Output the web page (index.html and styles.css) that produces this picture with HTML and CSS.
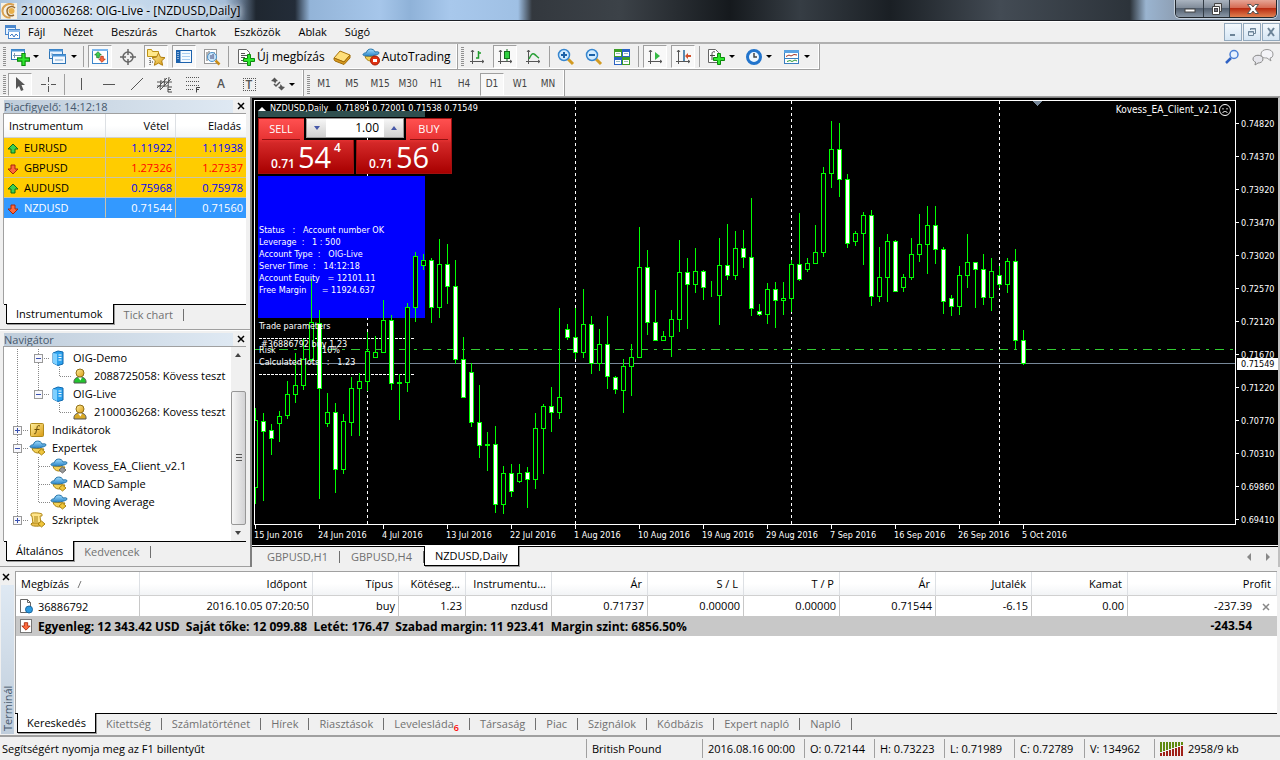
FILE: index.html
```html
<!DOCTYPE html>
<html lang="hu">
<head>
<meta charset="utf-8">
<title>2100036268: OIG-Live - [NZDUSD,Daily]</title>
<link rel="stylesheet" href="styles.css">
</head>
<body>
<svg class="defs" aria-hidden="true">
  <defs>
    <linearGradient id="gold" x1="0" y1="0" x2="1" y2="1"><stop offset="0" stop-color="#fff0a0"/><stop offset="1" stop-color="#d99a10"/></linearGradient>
    <linearGradient id="blue" x1="0" y1="0" x2="0" y2="1"><stop offset="0" stop-color="#9fdcff"/><stop offset="1" stop-color="#2c86c8"/></linearGradient>
    <symbol id="plus" viewBox="0 0 12 12"><path d="M4.500 .5h3v4h4v3h-4v4h-3v-4h-4v-3h4z" fill="#2ee62e" stroke="#0a8a0a"/></symbol>
    <symbol id="up" viewBox="0 0 12 12"><path d="M6 1l5 5H8v4H4V6H1z" fill="#3fcf4f" stroke="#0b6d1c"/></symbol>
    <symbol id="down" viewBox="0 0 12 12"><path d="M6 11l5-5H8V2H4v4H1z" fill="#ff6a3c" stroke="#a5260a"/></symbol>
    <symbol id="hat" viewBox="0 0 18 16"><path d="M3 8c1 6 9 7 12 1z" fill="#f2cf55" stroke="#a98210"/><path d="M1 6.500C0 9 17 8 17 5c0-2-3-1-4-1C12 0 5 0 4.500 4.500 3 5 1.500 5 1 6.500z" fill="url(#blue)" stroke="#2574a8"/></symbol>
    <symbol id="server" viewBox="0 0 14 16"><path d="M2 3l5-2 5 1v12l-5 1.500L2 13z" fill="#2da2ee" stroke="#0c67ae"/><path d="M2 3l4 1v11l-4-2z" fill="#7fd0ff"/><path d="M7.500 5h3M7.500 7.500h3M7.500 10h3" stroke="#fff"/></symbol>
    <symbol id="man" viewBox="0 0 14 16"><path d="M1 15c-.5-4 2-6 6-6s6.500 2 6 6z" stroke-width="1" stroke="#555"/><circle cx="7" cy="5" r="4" fill="url(#gold)" stroke="#927018"/><path d="M5 9.500l2.500 3L9 9.500" fill="#fff"/></symbol>
    <symbol id="axes" viewBox="0 0 16 16"><path d="M3.500 1v14M1 12.500h14M2 3l1.500-2L5 3M13 11l2 1.500-2 1.500" fill="none" stroke="#555"/></symbol>
  </defs>
</svg>

<div class="app">
  <header class="titlebar">
    <svg class="logo" width="16" height="16" viewBox="0 0 16 16"><rect width="16" height="16" fill="#f7f1e4"/><path d="M13 2C7-1 1 3 1.500 8.500c.3 4 4 6.500 8 6" fill="none" stroke="#d9a050" stroke-width="2"/><path d="M14 5c-3-3-8-1-8 3s3 6 7 4" fill="none" stroke="#9a6c30" stroke-width="1.500"/><circle cx="10.500" cy="8" r="3" fill="#e9b04a"/></svg>
    <h1>2100036268: OIG-Live - [NZDUSD,Daily]</h1>
    <div class="winbtns">
      <button class="wmin" aria-label="Minimize"><svg width="14" height="12" viewBox="0 0 14 12"><rect x="2" y="6" width="10" height="3" fill="#fff" stroke="#444"/></svg></button>
      <button class="wmax" aria-label="Restore"><svg width="14" height="14" viewBox="0 0 14 14"><path d="M4.500 1.500h7v8h-7z" fill="#ddd" stroke="#444"/><path d="M2.500 4.500h7v8h-7z" fill="#fff" stroke="#444"/><rect x="4.500" y="6.500" width="3" height="3" fill="#778" stroke="#444"/></svg></button>
      <button class="wclose" aria-label="Close"><svg width="14" height="12" viewBox="0 0 14 12"><path d="M1.500 1.500h3.500L7 4l2-2.500h3.500L9 6l3.500 4.500H9L7 8l-2 2.500H1.500L5 6z" fill="#fff" stroke="#555"/></svg></button>
    </div>
  </header>

  <nav class="menubar">
    <svg class="mdi" width="15" height="15" viewBox="0 0 15 15"><rect x=".5" y=".5" width="10" height="9" fill="#e8f3ff" stroke="#4b87cc"/><path d="M0 2h11" stroke="#4b87cc" stroke-width="2"/><rect x="3.500" y="4.500" width="11" height="9" fill="#fff" stroke="#4b87cc"/><path d="M3 6h12" stroke="#8fbcec" stroke-width="2"/><path d="M5 11l2-2 2 3 2-3 2 2" fill="none" stroke="#3a78c4"/></svg>
    <button>Fájl</button><button>Nézet</button><button>Beszúrás</button><button>Chartok</button><button>Eszközök</button><button>Ablak</button><button>Súgó</button>
    <div class="mdibtns">
      <button aria-label="Minimize chart"><svg width="12" height="12" viewBox="0 0 12 12"><path d="M3 9h5" stroke="#6c8498" stroke-width="2"/></svg></button>
      <button aria-label="Restore chart"><svg width="12" height="12" viewBox="0 0 12 12"><path d="M4.500 4V2.500h5v5H8M4 3h6M2.500 5.500h5v4h-5zM2 6h6" fill="none" stroke="#6c8498"/></svg></button>
      <button aria-label="Close chart"><svg width="12" height="12" viewBox="0 0 12 12"><path d="M3 2l6 8M9 2L3 10" stroke="#6c8498" stroke-width="2"/></svg></button>
    </div>
  </nav>

  <div class="toolrow">
    <div class="toolbar">
      <i class="grip"></i>
      <button class="dd" aria-label="Új chart"><svg width="20" height="18" viewBox="0 0 20 18"><rect x="1.500" y="1.500" width="13" height="10" fill="#fff" stroke="#2f75b5"/><path d="M1 2.500h14" stroke="#4b95d8" stroke-width="2"/><path d="M4.500 5v5M3 7.500h9" stroke="#7796b0"/><use href="#plus" x="7" y="5" width="13" height="13"/></svg><b></b></button>
      <button class="dd" aria-label="Profilok"><svg width="20" height="18" viewBox="0 0 20 18"><rect x="1.500" y="1.500" width="13" height="9" fill="#e6f2ff" stroke="#2f75b5"/><path d="M1 2.500h14" stroke="#4b95d8" stroke-width="2"/><rect x="4.500" y="6.500" width="13" height="9" fill="#f4f9ff" stroke="#2f75b5"/><path d="M4 7.500h14" stroke="#4b95d8" stroke-width="2"/><path d="M7 12h8M4 5v3" stroke="#7fa8cc"/></svg><b></b></button>
      <i class="sep"></i>
      <button class="on" aria-label="Piacfigyelő"><svg width="18" height="18" viewBox="0 0 18 18"><rect x="1.500" y="1.500" width="15" height="14" fill="#fff" stroke="#3b86cc"/><path d="M1 2h16" stroke="#7ab6ee" stroke-width="2"/><use href="#up" x="3" y="3" width="8" height="8"/><use href="#down" x="7" y="7" width="8" height="8"/></svg></button>
      <button aria-label="Adatablak"><svg width="18" height="18" viewBox="0 0 18 18"><circle cx="9" cy="9" r="5" fill="#eee" stroke="#666" stroke-width="1.500"/><path d="M9 1v6M9 11v6M1 9h6M11 9h6" stroke="#666" stroke-width="1.500"/></svg></button>
      <button class="on" aria-label="Navigátor"><svg width="20" height="18" viewBox="0 0 20 18"><path d="M1.500 8.500v-7h4l1 2h6v5z" fill="#ffe88a" stroke="#bd9215"/><path d="M4 10v7M4 14h3" stroke="#333" stroke-dasharray="1 1"/><path d="M12.500 5l2 4.200 4.500.5-3.300 3.100.9 4.500-4.100-2.200-4.100 2.200.9-4.500L6 9.700l4.500-.5z" fill="url(#gold)" stroke="#b07d0c"/></svg></button>
      <button class="on" aria-label="Terminál"><svg width="18" height="18" viewBox="0 0 18 18"><rect x="1.500" y="2.500" width="15" height="12" fill="#f4faff" stroke="#1c62ad"/><path d="M3.500 3v12" stroke="#1c62ad" stroke-width="4"/><path d="M3 4v8" stroke="#fff" stroke-dasharray="1 1"/><path d="M7 5.500h8M7 8.500h8M7 11.500h8" stroke="#a9cdf0"/></svg></button>
      <button aria-label="Stratégia teszter"><svg width="20" height="18" viewBox="0 0 20 18"><rect x="2.500" y="1.500" width="12" height="14" fill="#fff" stroke="#999"/><path d="M5 4v9M7 3v7M12 4v8" stroke="#666"/><circle cx="10" cy="9" r="4.500" fill="#c4e6ff" fill-opacity=".85" stroke="#4b92cc"/><path d="M9 7v4M11 6v5" stroke="#447"/><path d="M13.500 12.500l4 4" stroke="#c98d1a" stroke-width="2.500"/></svg></button>
      <i class="sep"></i>
      <button class="txt"><svg width="20" height="18" viewBox="0 0 20 18"><path d="M2.500 1.500h8l3 3v11h-11z" fill="#fff" stroke="#666"/><path d="M5 5.500h4M5 7.500h6M5 9.500h4M5 12.500h3" stroke="#555"/><use href="#plus" x="7" y="6" width="12" height="12"/></svg>Új megbízás</button>
      <button aria-label="MetaEditor"><svg width="18" height="16" viewBox="0 0 18 16"><path d="M1 9l6-7 10 4-6 7z" fill="#ffdf7a" stroke="#a9740c"/><path d="M1 9c0 2 0 2 1 3l9 3.500L17 9V6l-6 7z" fill="#d99a1e" stroke="#a06c0a"/></svg></button>
      <button class="txt"><svg width="20" height="18" viewBox="0 0 20 18"><use href="#hat" x="1" y="0" width="18" height="16"/><circle cx="14" cy="12.500" r="4.500" fill="#e03010" stroke="#a31c04"/><rect x="12" y="11" width="4" height="3" fill="#fff"/></svg>AutoTrading</button>
    </div>
    <div class="toolbar">
      <i class="grip"></i>
      <button aria-label="Oszlop"><svg width="16" height="16" viewBox="0 0 16 16"><use href="#axes" width="16" height="16"/><path d="M7 9h2.500V2M9.500 4H12" fill="none" stroke="#1e9a2a" stroke-width="1.500"/></svg></button>
      <button class="on" aria-label="Gyertya"><svg width="16" height="16" viewBox="0 0 16 16"><use href="#axes" width="16" height="16"/><path d="M10 0v12" stroke="#136b1c"/><rect x="7.500" y="2.500" width="5" height="7" fill="#2fcf3f" stroke="#136b1c"/></svg></button>
      <button aria-label="Vonal"><svg width="16" height="16" viewBox="0 0 16 16"><use href="#axes" width="16" height="16"/><path d="M4 10c2-4 3-6 5-5s3 3 5 4" fill="none" stroke="#2aa038" stroke-width="1.500"/></svg></button>
      <i class="sep"></i>
      <button aria-label="Nagyítás"><svg width="18" height="18" viewBox="0 0 18 18"><path d="M11 11l5 5" stroke="#d39b22" stroke-width="3"/><circle cx="7" cy="7" r="5.500" fill="#d3ecff" stroke="#3686cf" stroke-width="1.500"/><path d="M4 7h6M7 4v6" stroke="#1b62a8" stroke-width="2"/></svg></button>
      <button aria-label="Kicsinyítés"><svg width="18" height="18" viewBox="0 0 18 18"><path d="M11 11l5 5" stroke="#d39b22" stroke-width="3"/><circle cx="7" cy="7" r="5.500" fill="#d3ecff" stroke="#3686cf" stroke-width="1.500"/><path d="M4 7h6" stroke="#1b62a8" stroke-width="2"/></svg></button>
      <button aria-label="Mozaik"><svg width="16" height="16" viewBox="0 0 16 16"><path d="M0 0h8v8H0zM8 8h8v8H8z" fill="#3d9e28"/><path d="M8 0h8v8H8zM0 8h8v8H0z" fill="#2a63c4"/><path d="M1 3h6v4H1zM9 3h6v4H9zM1 11h6v4H1zM9 11h6v4H9z" fill="#fff"/><path d="M2 4.500h4M10 4.500h4M2 12.500h4M10 12.500h4" stroke="#9bb"/></svg></button>
      <i class="sep"></i>
      <button class="on" aria-label="Görgetés"><svg width="16" height="16" viewBox="0 0 16 16"><use href="#axes" width="16" height="16"/><path d="M8 3l5 4-5 4z" fill="#34b844"/></svg></button>
      <button class="on" aria-label="Eltolás"><svg width="16" height="16" viewBox="0 0 16 16"><use href="#axes" width="16" height="16"/><path d="M9 1v11" stroke="#25699c" stroke-width="1.500"/><path d="M10 7l3-3v2h3v2h-3v2z" fill="#d2502a"/></svg></button>
      <i class="sep"></i>
      <button class="dd" aria-label="Indikátorok"><svg width="20" height="18" viewBox="0 0 20 18"><path d="M2.500 1.500h7l3 3v10h-10z" fill="#fff" stroke="#666"/><path d="M9 4c-3-1-3 1-3 3v5M4 7.500h5" fill="none" stroke="#444"/><use href="#plus" x="7" y="5" width="12" height="12"/></svg><b></b></button>
      <button class="dd" aria-label="Időtávok"><svg width="18" height="18" viewBox="0 0 18 18"><circle cx="9" cy="9" r="6.500" fill="#eef7ff" stroke="#2274cc" stroke-width="3"/><path d="M9 5v4h3" fill="none" stroke="#444" stroke-width="1.500"/></svg><b></b></button>
      <button class="dd" aria-label="Sablonok"><svg width="18" height="18" viewBox="0 0 18 18"><rect x="1.500" y="2.500" width="14" height="13" fill="#fff" stroke="#3a7fc1"/><path d="M1 3.500h15" stroke="#5aa2e2" stroke-width="3"/><path d="M3 8.500l3-1.500 2 1 3-1.500 3 .5" fill="none" stroke="#a33222"/><path d="M1 10.500h15" stroke="#3a7fc1"/><path d="M4 13.500l3-1 2 1 3-1.500 2 1" fill="none" stroke="#2b9a35"/></svg><b></b></button>
    </div>
    <div class="toolend">
      <button aria-label="Keresés"><svg width="16" height="16" viewBox="0 0 16 16"><path d="M7 9l-5 5" stroke="#2f62c4" stroke-width="2.500"/><circle cx="10" cy="5.500" r="4" fill="#e6f1ff" stroke="#4a7fd6" stroke-width="1.500"/></svg></button>
      <button aria-label="Üzenetek"><svg width="22" height="18" viewBox="0 0 22 18"><path d="M9 6c0-6 12-6 12 0 0 3-1.500 4-3 4l1 3-4-3c-4 0-6-1-6-4z" fill="#f4f4f8" stroke="#999"/><path d="M1 11c0-5 10-5 10 0 0 3-3 4-5 4l-3 2 .5-3C2 13.500 1 12.500 1 11z" fill="#e6e6ec" stroke="#888"/></svg></button>
    </div>
  </div>

  <div class="toolrow second">
    <div class="toolbar">
      <i class="grip"></i>
      <button class="on" aria-label="Kurzor"><svg width="16" height="18" viewBox="0 0 16 18"><path d="M4 2v12l3-3 2 5 2.500-1-2-5H13z" fill="#555"/></svg></button>
      <button aria-label="Célkereszt"><svg width="18" height="18" viewBox="0 0 18 18"><path d="M9.500 2v5M9.500 11v6M2 9.500h5M12 9.500h5" stroke="#555"/><path d="M9 9.500h1" stroke="#555"/></svg></button>
      <i class="sep"></i>
      <button aria-label="Függőleges vonal"><svg width="16" height="16" viewBox="0 0 16 16"><path d="M8.500 2v12" stroke="#555"/></svg></button>
      <button aria-label="Vízszintes vonal"><svg width="16" height="16" viewBox="0 0 16 16"><path d="M2 8.500h12" stroke="#555"/></svg></button>
      <button aria-label="Trendvonal"><svg width="16" height="16" viewBox="0 0 16 16"><path d="M2 14L14 2" stroke="#555"/></svg></button>
      <button aria-label="Csatorna"><svg width="18" height="18" viewBox="0 0 18 18"><path d="M1 13L11 3M4 15L15 4M1 7h15M1 11h12M5 5l-1 9M9 3l-1 9M13 2l-1 9" stroke="#555"/><path d="M16 12h-4v5h4M12 14.500h3" fill="none" stroke="#444"/></svg></button>
      <button aria-label="Fibonacci"><svg width="18" height="18" viewBox="0 0 18 18"><path d="M2 2.500h14M2 6.500h14M2 10.500h14M2 14.500h7" stroke="#555" stroke-dasharray="1 1"/><path d="M16 12.500h-3.500v5M12 14.500h3" fill="none" stroke="#444"/></svg></button>
      <button class="glyph">A</button>
      <button class="glyph"><span class="boxed">T</span></button>
      <button class="dd" aria-label="Nyilak"><svg width="16" height="16" viewBox="0 0 16 16"><path d="M1 5l3.500-3.500L8 5 6 5.500l-.5 2-2-2zM8 11l2-.5L10.500 8l2 2.500 2.500.5-3.500 3.500z" fill="#555"/><path d="M4 8l2 2 4-4" fill="none" stroke="#555" stroke-width="1.500"/></svg><b></b></button>
    </div>
    <div class="toolbar times">
      <i class="grip"></i>
      <button>M1</button><button>M5</button><button>M15</button><button>M30</button><button>H1</button><button>H4</button><button class="on">D1</button><button>W1</button><button>MN</button>
    </div>
  </div>

  <main class="work">
    <aside class="docks">
      <section class="dock market">
        <div class="dockhead"><h2>Piacfigyelő: 14:12:18</h2><button class="x" aria-label="Bezárás"><svg width="8" height="8" viewBox="0 0 8 8"><path d="M1 1l6 6M7 1L1 7" stroke="#000" stroke-width="1.500"/></svg></button></div>
        <div class="dockbody">
          <table class="quotes">
            <thead><tr><th>Instrumentum</th><th class="bid">Vétel</th><th class="ask">Eladás</th></tr></thead>
            <tbody>
              <tr class="rise"><td><svg width="12" height="12"><use href="#up"/></svg>EURUSD</td><td>1.11922</td><td>1.11938</td></tr>
              <tr class="fall"><td><svg width="12" height="12"><use href="#down"/></svg>GBPUSD</td><td>1.27326</td><td>1.27337</td></tr>
              <tr class="rise"><td><svg width="12" height="12"><use href="#up"/></svg>AUDUSD</td><td>0.75968</td><td>0.75978</td></tr>
              <tr class="sel"><td><svg width="12" height="12"><use href="#down"/></svg>NZDUSD</td><td>0.71544</td><td>0.71560</td></tr>
            </tbody>
          </table>
        </div>
        <div class="tabs"><button class="active">Instrumentumok</button><button>Tick chart</button></div>
      </section>

      <section class="dock">
        <div class="dockhead"><h2>Navigátor</h2><button class="x" aria-label="Bezárás"><svg width="8" height="8" viewBox="0 0 8 8"><path d="M1 1l6 6M7 1L1 7" stroke="#000" stroke-width="1.500"/></svg></button></div>
        <div class="dockbody navbody">
          <ul class="tree">
            <li><svg class="guide" width="46" height="18"><path d="M13.500 0v18M34.500 0v18M38 9.500h8"/><rect x="30.500" y="5.500" width="8" height="8"/><path class="sign" d="M32 9.500h5"/></svg><svg width="18" height="16"><use href="#server" width="14" height="16" x="1"/></svg><span>OIG-Demo</span></li>
            <li><svg class="guide" width="67" height="18"><path d="M13.500 0v18M34.500 0v18M55.500 0v9.500h12"/></svg><svg width="18" height="16"><use href="#man" width="14" height="16" x="2" fill="#23c32f"/></svg><span>2088725058: Kövess teszt</span></li>
            <li><svg class="guide" width="46" height="18"><path d="M13.500 0v18M34.500 0v9M38 9.500h8"/><rect x="30.500" y="5.500" width="8" height="8"/><path class="sign" d="M32 9.500h5"/></svg><svg width="18" height="16"><use href="#server" width="14" height="16" x="1"/></svg><span>OIG-Live</span></li>
            <li><svg class="guide" width="67" height="18"><path d="M13.500 0v18M55.500 0v9.500h12"/></svg><svg width="18" height="16"><use href="#man" width="14" height="16" x="2" fill="#d8a927"/></svg><span>2100036268: Kovess teszt</span></li>
            <li><svg class="guide" width="25" height="18"><path d="M13.500 0v18M17 9.500h8"/><rect x="9.500" y="5.500" width="8" height="8"/><path class="sign" d="M11 9.500h5M13.500 7v5"/></svg><svg width="18" height="16" viewBox="0 0 18 16"><rect x="1.500" y="1.500" width="13" height="13" rx="1" fill="url(#gold)" stroke="#b08a1c"/><path d="M11 4c-2-1-3 0-3 2l-1 4c0 2-1 2-2 1.500M5.500 7.500h5" fill="none" stroke="#6c5008"/></svg><span>Indikátorok</span></li>
            <li><svg class="guide" width="25" height="18"><path d="M13.500 0v18M17 9.500h8"/><rect x="9.500" y="5.500" width="8" height="8"/><path class="sign" d="M11 9.500h5"/></svg><svg width="18" height="16" viewBox="0 0 18 16"><use href="#hat" width="18" height="16"/><path d="M12.500 9l3.500 3-3.500 3L9 12z" fill="#f0c63c" stroke="#a98210"/></svg><span>Expertek</span></li>
            <li><svg class="guide" width="46" height="18"><path d="M13.500 0v18M34.500 0v18M35 9.500h11"/></svg><svg width="18" height="16" viewBox="0 0 18 16"><use href="#hat" width="18" height="16"/><path d="M12.500 9l3.500 3-3.500 3L9 12z" fill="#999" stroke="#666"/></svg><span>Kovess_EA_Client_v2.1</span></li>
            <li><svg class="guide" width="46" height="18"><path d="M13.500 0v18M34.500 0v18M35 9.500h11"/></svg><svg width="18" height="16" viewBox="0 0 18 16"><use href="#hat" width="18" height="16"/><path d="M12.500 9l3.500 3-3.500 3L9 12z" fill="#f0c63c" stroke="#a98210"/></svg><span>MACD Sample</span></li>
            <li><svg class="guide" width="46" height="18"><path d="M13.500 0v18M34.500 0v9.500h12"/></svg><svg width="18" height="16" viewBox="0 0 18 16"><use href="#hat" width="18" height="16"/><path d="M12.500 9l3.500 3-3.500 3L9 12z" fill="#f0c63c" stroke="#a98210"/></svg><span>Moving Average</span></li>
            <li><svg class="guide" width="25" height="18"><path d="M13.500 0v6M17 9.500h8"/><rect x="9.500" y="5.500" width="8" height="8"/><path class="sign" d="M11 9.500h5M13.500 7v5"/></svg><svg width="18" height="16" viewBox="0 0 18 16"><path d="M2 2c0-2 10-1 11 0v2h-2l1 8H4L3 4H2z" fill="#ffe48a" stroke="#b48b1d"/><path d="M2 12c0 3 8 2 9 2V11H3zM5 5h4M5 7h4M5 9h4" fill="#e8bd4c" stroke="#a98210"/><path d="M12.500 9l3.500 3-3.500 3L9 12z" fill="#f0c63c" stroke="#a98210"/></svg><span>Szkriptek</span></li>
          </ul>
          <div class="scroll">
            <svg width="14" height="16" viewBox="0 0 14 16"><path d="M4 10l3-4 3 4z" fill="#444"/></svg>
            <i class="track"></i>
            <i class="thumb"><svg width="8" height="10" viewBox="0 0 8 10"><path d="M1 1.500h6M1 4.500h6M1 7.500h6" stroke="#555"/></svg></i>
            <svg width="14" height="16" viewBox="0 0 14 16"><path d="M4 6l3 4 3-4z" fill="#444"/></svg>
          </div>
        </div>
        <div class="tabs"><button class="active">Általános</button><button>Kedvencek</button></div>
      </section>
    </aside>

    <section class="chartcol">
      <div class="chart">
        <div class="plot">
          <svg id="candles" class="canvas" shape-rendering="crispEdges"></svg>
          <pre class="ea">Status   :   Account number OK
Leverage  :   1 : 500
Account Type  :   OIG-Live
Server Time  :   14:12:18
Account Equity   = 12101.11
Free Margin      = 11924.637</pre>
          <pre class="params">Trade parameters

Risk                  10%
Calculated lots   :   1.23</pre>
          <span class="order">#36886792 buy 1.23</span>
          <div class="ohlc"><svg width="8" height="5" viewBox="0 0 8 5"><path d="M0 5l4-4 4 4z" fill="#fff"/></svg><span>NZDUSD,Daily</span><span class="vals">0.71895 0.72001 0.71538 0.71549</span></div>
          <div class="trade">
            <button class="deal sell"><span class="side">SELL</span><span class="price"><small>0.71</small><em>54</em><sup>4</sup></span></button>
            <button class="deal buy"><span class="side">BUY</span><span class="price"><small>0.71</small><em>56</em><sup>0</sup></span></button>
            <div class="volume">
              <button aria-label="Kevesebb"><svg width="6" height="4"><path d="M0 0h6L3 4z" fill="#4658a8"/></svg></button>
              <input type="text" value="1.00" aria-label="Volumen">
              <button aria-label="Több"><svg width="6" height="4"><path d="M0 4h6L3 0z" fill="#4658a8"/></svg></button>
            </div>
          </div>
          <div class="expert">Kovess_EA_Client_v2.1<svg width="12" height="12" viewBox="0 0 12 12"><circle cx="6" cy="6" r="5.500" fill="none" stroke="#fff"/><path d="M3.500 9c1-2 4-2 5 0M4 4v1.500M8 4v1.500" fill="none" stroke="#fff"/></svg></div>
        </div>
        <ol class="prices"><li>0.74820</li><li>0.74370</li><li>0.73920</li><li>0.73470</li><li>0.73020</li><li>0.72570</li><li>0.72120</li><li>0.71670</li><li>0.71220</li><li>0.70770</li><li>0.70310</li><li>0.69860</li><li class="end">0.69410</li><li class="last">0.71549</li></ol>
        <ol class="dates"><li>15 Jun 2016</li><li>24 Jun 2016</li><li>4 Jul 2016</li><li>13 Jul 2016</li><li>22 Jul 2016</li><li>1 Aug 2016</li><li>10 Aug 2016</li><li>19 Aug 2016</li><li>29 Aug 2016</li><li>7 Sep 2016</li><li>16 Sep 2016</li><li>26 Sep 2016</li><li>5 Oct 2016</li></ol>
      </div>
      <div class="tabs charttabs"><button>GBPUSD,H1</button><button>GBPUSD,H4</button><button class="active">NZDUSD,Daily</button>
        <svg class="arrows" width="30" height="10" viewBox="0 0 30 10"><path d="M5 1v8L1 5zM20 1v8l4-4z" fill="#888"/></svg></div>
    </section>
  </main>

  <section class="terminal">
    <div class="spine"><button class="x" aria-label="Bezárás"><svg width="8" height="8" viewBox="0 0 8 8"><path d="M1 1l6 6M7 1L1 7" stroke="#000" stroke-width="1.500"/></svg></button><h2>Terminál</h2></div>
    <div class="termbody">
      <div class="trades">
        <table>
          <colgroup><col class="c1"><col class="c2"><col class="c3"><col class="c4"><col class="c3"><col class="c5"><col class="c5"><col class="c5"><col class="c5"><col class="c5"><col class="c5"><col></colgroup>
          <thead><tr><th>Megbízás <svg width="8" height="8" viewBox="0 0 8 8"><path d="M1 8l3-7" stroke="#777"/></svg></th><th>Időpont</th><th>Típus</th><th>Kötéseg...</th><th>Instrumentu...</th><th>Ár</th><th>S / L</th><th>T / P</th><th>Ár</th><th>Jutalék</th><th>Kamat</th><th>Profit</th></tr></thead>
          <tbody>
            <tr><td><svg width="16" height="16" viewBox="0 0 16 16"><path d="M2.500 1.500h7l3 3v10h-10z" fill="#fff" stroke="#666"/><path d="M9.500 1.500v3h3" fill="none" stroke="#666"/><circle cx="11" cy="11.500" r="3.500" fill="#2c9ae0" stroke="#17669e"/></svg>36886792</td><td>2016.10.05 07:20:50</td><td>buy</td><td>1.23</td><td>nzdusd</td><td>0.71737</td><td>0.00000</td><td>0.00000</td><td>0.71544</td><td>-6.15</td><td>0.00</td><td class="profit">-237.39<button class="x" aria-label="Pozíció zárása"><svg width="8" height="8" viewBox="0 0 8 8"><path d="M1 1l6 6M7 1L1 7" stroke="#888" stroke-width="1.500"/></svg></button></td></tr>
            <tr class="sum"><td colspan="11"><svg width="16" height="16" viewBox="0 0 16 16"><rect x="2.500" y="1.500" width="11" height="13" fill="#fff" stroke="#777"/><use href="#down" x="3" y="3" width="10" height="10"/></svg>Egyenleg: 12 343.42 USD&nbsp; Saját tőke: 12 099.88&nbsp; Letét: 176.47&nbsp; Szabad margin: 11 923.41&nbsp; Margin szint: 6856.50%</td><td class="profit">-243.54</td></tr>
          </tbody>
        </table>
      </div>
      <div class="tabs"><button class="active">Kereskedés</button><button>Kitettség</button><button>Számlatörténet</button><button>Hírek</button><button>Riasztások</button><button>Levelesláda<sub>6</sub></button><button>Társaság</button><button>Piac</button><button>Szignálok</button><button>Kódbázis</button><button>Expert napló</button><button>Napló</button></div>
    </div>
  </section>

  <footer class="status">
    <span class="help">Segítségért nyomja meg az F1 billentyűt</span>
    <span class="s1">British Pound</span><span class="s2">2016.08.16 00:00</span><span class="s3">O: 0.72144</span><span class="s3">H: 0.73223</span><span class="s3">L: 0.71989</span><span class="s3">C: 0.72789</span><span class="s3">V: 134962</span>
    <span class="net"><svg width="25" height="14" viewBox="0 0 25 14"><path d="M1 0v10M4 0v9M7 0v8M10 0v7M13 0v6M16 0v5M19 0v4M22 0v3" stroke="#5f8a10" stroke-width="2"/><path d="M1 11v3M4 10v4M7 9v5M10 8v6M13 7v7M16 6v8M19 5v9M22 4v10" stroke="#a02018" stroke-width="2"/></svg>2958/9 kb</span>
  </footer>
</div>
<script src="chart.js"></script>
</body>
</html>
```

FILE: styles.css
```css
* { box-sizing: border-box; }
body {
  margin: 0;
  background: #f0f0f0;
  color: #000;
  font: 11px/16px "Open Sans", "Noto Sans", sans-serif;
}
button { margin: 0; padding: 0; border: 0; background: none; color: inherit; font: inherit; }
h1, h2 { margin: 0; font: inherit; }
ul, ol { margin: 0; padding: 0; list-style: none; }
pre { margin: 0; font: inherit; }
svg { display: block; flex: none; }
.defs { position: absolute; width: 0; height: 0; }
.app { display: flex; flex-direction: column; min-height: 100vh; }

/* window frame */
.titlebar {
  display: flex; align-items: center; height: 22px; padding-left: 1px;
  border-bottom: 1px solid #fff;
  box-shadow: inset 0 -1px #1c2026;
  background: linear-gradient(90deg, #a9c2dc 0, #d3e3f2 60px, #c2d6ea 150px, #a4bdd8 225px, #6c8098 240px, #1f2730 256px, #232c38 295px, #93b4d8 310px, #a6c6ea 380px, #8fb2d8 410px, #a8c8ec 450px, #9fc0e4 518px, #33383e 532px, #3c4248 620px, #15191d 730px, #363d44 800px, #1a1f24 890px, #434b54 1000px, #2c333a 1130px, #9ab4d0 1146px, #8c9cb0 1180px, #7e93ac 1280px);
}
.titlebar h1 { flex: 1; padding-left: 4px; font-size: 12px; text-shadow: 0 0 6px #fff, 0 0 6px #fff; }
.winbtns { display: flex; align-self: flex-start; height: 18px; margin-right: 3px; border: 1px solid #20262c; border-top: 0; border-radius: 0 0 5px 5px; overflow: hidden; box-shadow: 0 0 0 1px #c5d0dc; }
.winbtns button { display: flex; align-items: center; justify-content: center; border-right: 1px solid #333c46; background: linear-gradient(#aab4c0, #7d8896 50%, #536070 50%, #8a97a6); }
.wmin { width: 28px; } .wmax { width: 26px; }
.winbtns .wclose { width: 46px; border: 0; background: linear-gradient(#e6a596, #d4654c 50%, #b92c12 50%, #e08050); }

.menubar { display: flex; align-items: center; height: 22px; padding-left: 5px; border-bottom: 2px solid #b0b0b0; }
.menubar > button { height: 20px; padding: 0 9px; }
.menubar .mdi { margin-right: -1px; }
.mdibtns { display: flex; gap: 1px; margin-left: auto; }
.mdibtns button { display: flex; align-items: center; justify-content: center; width: 18px; height: 18px; border: 1px solid #93a9bd; background: linear-gradient(#f4f9fd, #d6e6f4); }

/* toolbars */
.toolrow { display: flex; height: 26px; }
.toolbar { display: flex; align-items: center; gap: 4px; padding: 0 5px 0 3px; border-right: 1px solid #a0a0a0; border-bottom: 1px solid #a0a0a0; box-shadow: inset -1px -1px #fff; }
.second { height: 27px; border-bottom: 1px solid #a0a0a0; }
.second .toolbar { padding-top: 2px; padding-right: 4px; border-bottom: 0; }
.grip { width: 3px; height: 19px; margin-right: -3px; background: repeating-linear-gradient(#909090 0 1px, transparent 1px 2px); }
.second .grip { margin-right: -2px; }
.sep { width: 1px; height: 21px; background: #a0a0a0; }
.toolbar button { display: flex; align-items: center; justify-content: center; width: 24px; height: 23px; }
.toolbar .dd { width: 34px; gap: 3px; }
.toolbar .txt { width: auto; gap: 1px; padding: 0 1px 0 3px; font-size: 12px; }
.dd b { border: 3px solid transparent; border-top-color: #000; border-bottom: 0; }
.toolbar .on { border: 1px solid; border-color: #a0a0a0 #fff #fff #a0a0a0; background: #f8f8f8; }
.toolend { display: flex; align-items: center; gap: 12px; margin-left: auto; padding-right: 6px; }
.toolbar .glyph { color: #555; font-weight: 600; font-size: 12px; }
.boxed { width: 13px; height: 13px; border: 1px dotted #555; line-height: 11px; }
.times { color: #444; font: 10px/16px "DejaVu Sans Condensed", "DejaVu Sans", sans-serif; }

/* tabs shared by every dock */
.tabs { display: flex; height: 21px; border-top: 1px solid #000; color: #707070; }
.tabs button { position: relative; height: 19px; padding: 0 11px 0 10px; }
.tabs button::after { content: ""; position: absolute; right: 0; top: 4px; height: 12px; border-right: 1px solid #707070; }
.tabs .active { margin-top: -1px; margin-left: 2px; height: 20px; padding: 0 9px; border: solid #000; border-width: 0 1px 1px; background: #fff; color: #000; box-shadow: 1px 1px #999; }
.tabs .active::after { border: 0; }
.tabs sub { color: #f00; font-size: 9px; font-weight: 600; line-height: 0; }
.x { display: flex; align-items: center; justify-content: center; width: 12px; height: 12px; }

/* docks */
.work { flex: 1; display: flex; min-height: 468px; }
.docks { display: flex; flex-direction: column; width: 250px; }
.dock { flex: 236; display: flex; flex-direction: column; padding: 1px 4px 4px; border-bottom: 1px solid #a0a0a0; border-top: 1px solid #fff; }
.market { flex: 232; }
.dockhead { display: flex; align-items: center; height: 14px; margin-right: -1px; color: #46586c; line-height: 13px; }
.dockhead h2 { flex: 1; background: linear-gradient(90deg, #bfcddb, #dfe9f3); }
.dockhead .x { margin-left: 2px; }
.dockbody { flex: 1; border-top: 1px solid #a0a0a0; border-left: 1px solid #a0a0a0; margin-left: -1px; background: #fff; }
.dock .tabs .active { padding: 0 10px 0 9px; }
table { width: 100%; border-collapse: separate; border-spacing: 0; table-layout: fixed; }
th, td { padding: 0 4px; font-weight: 400; text-align: right; white-space: nowrap; overflow: hidden; }
th { height: 24px; border-right: 1px solid #dde0e4; background: linear-gradient(#fff 50%, #f2f4f6); border-bottom: 1px solid #d0d0d0; }
th:first-child, td:first-child { text-align: left; }
td svg { display: inline-block; vertical-align: -3px; margin-right: 5px; }
.quotes th { padding: 0 6px 0 5px; }
.bid, .ask { width: 70px; }
.quotes .ask { padding-right: 5px; }
.quotes td { height: 20px; padding: 0 3px; border: solid #c9c4a8; border-width: 0 1px 1px 0; }
.quotes tr > :last-child { border-right: 0; }
.quotes tbody tr { background: #fc0; }
.quotes .rise td + td { color: #00f; }
.quotes .fall td + td { color: #f00; }
.quotes .sel { background: #39f; color: #fff; }
.quotes .sel td { border-bottom-color: #39f; }

.navbody { display: flex; }
.tree { flex: 1; padding-top: 2px; }
.tree li { display: flex; align-items: center; height: 18px; }
.tree span { padding-left: 5px; white-space: nowrap; }
.guide path { fill: none; stroke: #888; stroke-dasharray: 1 1; }
.guide rect { fill: #f8f8fc; stroke: #999; }
.guide .sign { stroke: #3850b0; stroke-dasharray: none; }
.scroll { display: flex; flex-direction: column; width: 15px; background: #f0f0f0; }
.track { flex: 28; }
.thumb { flex: 130; display: flex; align-items: center; justify-content: center; border: 1px solid #979797; border-radius: 2px; background: linear-gradient(90deg, #f6f6f6, #d2d2d4); }

/* chart */
.chartcol { flex: 1; min-width: 0; display: flex; flex-direction: column; border: solid #808080; border-width: 1px 2px 0; border-right-color: #c0c0c0; }
.chart {
  flex: 1; display: grid; grid-template: 1fr 21px / 1fr 42px; padding: 2px 0 0 2px;
  background: #000; color: #fff;
  font: 9px/12px "DejaVu Sans Condensed", "DejaVu Sans", sans-serif;
}
.plot { position: relative; border: 1px solid #fff; overflow: hidden; }
.canvas { width: 100%; height: 100%; position: absolute; inset: 0; }
.ea { position: absolute; left: 4px; top: 123px; }
.params { position: absolute; left: 4px; top: 219px; }
.order { position: absolute; left: 6px; top: 237px; }
.ohlc { position: absolute; left: 3px; top: 1px; display: flex; align-items: center; gap: 4px; }
.ohlc span { white-space: pre; }
.ohlc .vals { padding-left: 4px; }
.expert { position: absolute; right: 4px; top: 3px; display: flex; align-items: center; gap: 1px; font-size: 10px; }
.prices { position: relative; padding-top: 7px; }
.prices li { display: flex; align-items: center; gap: 2px; height: 33px; }
.prices li::before { content: ""; width: 3px; height: 1px; background: #fff; }
.prices .end { margin-bottom: -16px; }
.prices .last { position: absolute; left: 1px; right: 0; top: 258px; height: 12px; padding-left: 4px; background: #fff; color: #000; }
.prices .last::before { display: none; }
.dates { display: flex; grid-column: 1 / -1; }
.dates li { width: 64px; padding-top: 4px; white-space: nowrap; background: linear-gradient(#fff, #fff) 1px 0 / 1px 4px no-repeat; }

.trade { position: absolute; left: 3px; top: 17px; display: flex; gap: 2px; font-family: "Open Sans", sans-serif; }
.deal { display: flex; flex-direction: column; width: 96px; height: 56px; border: 1px solid #a01010; background: linear-gradient(#ff5050, #e83434 20px, #d42828 24px, #a80000); color: #fff; }
.sell { clip-path: polygon(0 0, 46px 0, 46px 22px, 100% 22px, 100% 100%, 0 100%); }
.buy { align-items: flex-end; clip-path: polygon(50px 0, 100% 0, 100% 100%, 0 100%, 0 22px, 50px 22px); }
.side { width: 38px; height: 21px; margin: 0 3px; border-bottom: 1px solid #901010; font-size: 11px; line-height: 20px; }
.price { display: flex; align-items: flex-end; justify-content: center; gap: 3px; width: 100%; height: 33px; }
.price small { font-size: 12px; font-weight: 600; line-height: 18px; }
.price em { font-size: 29px; font-style: normal; line-height: 33px; }
.price sup { align-self: flex-start; font-size: 12px; font-weight: 600; line-height: 16px; }
.volume { position: absolute; left: 48px; top: 0; display: flex; width: 98px; height: 20px; border: 1px solid #999; background: #fff; }
.volume button { display: flex; align-items: center; justify-content: center; width: 19px; background: linear-gradient(#f6f6f6, #d0d0d0); }
.volume input { flex: 1; min-width: 0; padding: 0 5px; border: 0; font: 12px/18px "Open Sans", sans-serif; text-align: right; }

.charttabs { height: 21px; border-top: 1px solid #000; box-shadow: 0 -1px #fff; padding-left: 4px; }
.charttabs button { padding: 0 12px 0 11px; }
.charttabs .active { margin-left: 0; padding: 0 10px; }
.charttabs .arrows { margin: 5px 2px 0 auto; }

/* terminal */
.terminal { display: flex; padding: 4px 3px 1px 0; border-bottom: 2px solid #a0a0a0; }
.spine { display: flex; flex-direction: column; width: 15px; }
.spine h2 { flex: 1; margin: 2px 1px 0; writing-mode: vertical-rl; transform: rotate(180deg); background: linear-gradient(#bfcddb, #dfe9f3); color: #46586c; line-height: 13px; padding-top: 3px; }
.terminal .termbody { flex: 1; min-width: 0; }
.trades { min-height: 142px; border-top: 1px solid #a0a0a0; border-left: 1px solid #a0a0a0; background: #fff; }
.c1 { width: 124px; } .c2 { width: 173px; } .c3 { width: 86px; } .c4 { width: 67px; } .c5 { width: 96px; }
.trades th { padding: 0 5px; }
.trades th svg { display: inline-block; margin-left: 5px; }
.trades td { height: 20px; padding: 0 3px 0 2px; border-right: 1px solid #c8c8c8; }
.trades td svg { margin-right: 4px; }
.trades .profit { border: 0; padding-right: 25px; position: relative; }
.profit .x { position: absolute; right: 5px; top: 5px; }
.trades .profit .x svg { margin: 0; }
.sum td { border: 0; background: #c8c8c8; font-weight: 700; font-size: 12px; }

.status { display: flex; align-items: stretch; height: 23px; padding: 2px 0; line-height: 20px; white-space: nowrap; }
.status span { padding-left: 5px; border-left: 1px solid #a0a0a0; }
.status .help { flex: 1; padding-left: 2px; border: 0; }
.status .s1 { width: 116px; } .status .s2 { width: 102px; } .status .s3 { width: 70px; }
.status .net { display: flex; align-items: center; gap: 3px; width: 126px; }
```

FILE: chart.js
```js
// Each row: high, body top, body bottom, low (pixel rows of the window), 1 = rising bar.
const bars = [
[408,420,487,503,1],[413,421,431,500,0],[424,430,438,454,0],[411,416,423,441,1],[381,394,415,418,1],[353,385,394,402,1],[339,359,385,389,1],[279,322,359,361,1],
[310,323,388,498,0],[393,412,423,426,1],[403,412,469,492,0],[414,421,469,473,1],[377,388,422,435,1],[373,381,388,435,1],[332,351,381,390,1],[336,352,357,357,1],
[300,320,352,352,1],[315,320,383,389,0],[374,382,383,419,1],[303,307,382,391,1],[252,256,307,321,1],[254,260,265,269,1],[258,260,307,322,0],[239,264,307,317,1],
[244,264,286,303,0],[260,286,359,363,0],[337,359,397,397,0],[363,372,422,426,0],[385,422,445,457,0],[432,444,445,470,0],[426,444,504,512,0],[466,473,504,513,1],
[464,473,491,496,0],[464,473,481,482,1],[467,472,479,507,0],[413,428,479,488,1],[404,406,428,473,1],[387,406,412,431,0],[308,397,412,418,1],[324,329,337,339,0],
[308,337,352,358,0],[289,324,352,357,1],[316,324,363,373,0],[329,344,363,370,1],[316,344,376,388,0],[376,377,389,393,0],[359,366,390,412,1],[344,357,366,395,1],
[227,267,357,357,1],[250,267,322,334,0],[290,322,340,340,0],[331,336,340,340,1],[310,319,336,356,1],[240,272,319,331,1],[258,272,284,328,0],[248,271,284,292,1],
[270,271,287,299,0],[281,295,295,296,1],[238,265,295,324,1],[224,265,275,279,0],[231,248,275,279,1],[230,248,257,267,0],[198,257,308,315,0],[304,311,314,315,0],
[283,289,314,323,1],[282,289,300,327,0],[282,298,300,314,1],[260,264,298,311,1],[213,264,279,280,0],[258,263,269,271,1],[225,252,263,263,1],[167,173,252,256,1],
[121,149,173,187,1],[123,149,179,196,0],[174,179,243,247,0],[231,233,241,245,1],[212,215,233,264,1],[210,215,296,305,0],[247,277,296,301,1],[234,241,277,301,1],
[240,241,291,291,0],[274,277,287,291,1],[238,254,277,279,1],[214,244,254,261,1],[206,225,244,273,1],[206,225,249,263,0],[247,249,301,313,0],[295,298,306,315,0],
[266,275,306,314,1],[234,262,275,287,1],[262,262,269,307,0],[254,269,297,304,0],[258,271,297,310,1],[266,275,284,287,0],[258,261,284,292,1],[249,261,340,348,0],
[330,340,363,364,0]
];
const TOP = 101, STEP = 8;
const line = (x1, y1, x2, y2, stroke, dash = "none") =>
  `<line x1="${x1}" y1="${y1}" x2="${x2}" y2="${y2}" stroke="${stroke}" stroke-dasharray="${dash}"/>`;

let out = "";
for (const i of [14, 40, 67, 93]) out += line(i * STEP + .5, 0, i * STEP + .5, "100%", "#fff", "3 3");
out += '<rect x="3" y="10" width="167" height="6" fill="#2f4f4f"/>';
out += '<rect x="3" y="75" width="167" height="142" fill="#00f"/>';
out += line(0, 248.5, "100%", 248.5, "#32cd32", "9 6 3 6");
out += line(0, 262.5, "100%", 262.5, "#778899");
out += line(4, 237.5, 160, 237.5, "#fff", "3 1") + line(4, 273.5, 160, 273.5, "#fff", "3 1");
bars.forEach(([high, top, bottom, low, rising], i) => {
  const x = i * STEP + .5;
  out += line(x, high - TOP, x, low - TOP + 1, "#0f0");
  out += `<rect x="${x - 2}" y="${top - TOP + .5}" width="4" height="${bottom - top}" fill="${rising ? "#000" : "#fff"}" stroke="#0f0"/>`;
});
out += '<path d="M777 0h10l-5 5z" fill="#778899"/>';
document.getElementById("candles").innerHTML = out;
```
